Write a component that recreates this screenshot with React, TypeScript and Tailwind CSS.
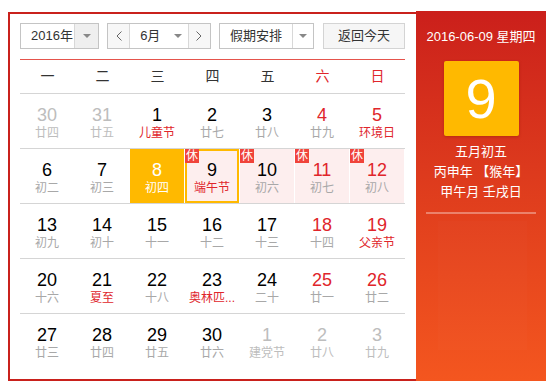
import React from 'react';

type Day = {
  d: number;
  sub: string;
  other?: boolean;
  weekend?: boolean;
  fest?: boolean;
  rest?: boolean;
  today?: boolean;
  picked?: boolean;
};

const weeks: Day[][] = [
  [
    { d: 30, sub: '廿四', other: true },
    { d: 31, sub: '廿五', other: true },
    { d: 1, sub: '儿童节', fest: true },
    { d: 2, sub: '廿七' },
    { d: 3, sub: '廿八' },
    { d: 4, sub: '廿九', weekend: true },
    { d: 5, sub: '环境日', weekend: true, fest: true },
  ],
  [
    { d: 6, sub: '初二' },
    { d: 7, sub: '初三' },
    { d: 8, sub: '初四', today: true },
    { d: 9, sub: '端午节', fest: true, rest: true, picked: true },
    { d: 10, sub: '初六', rest: true },
    { d: 11, sub: '初七', rest: true, weekend: true },
    { d: 12, sub: '初八', rest: true, weekend: true },
  ],
  [
    { d: 13, sub: '初九' },
    { d: 14, sub: '初十' },
    { d: 15, sub: '十一' },
    { d: 16, sub: '十二' },
    { d: 17, sub: '十三' },
    { d: 18, sub: '十四', weekend: true },
    { d: 19, sub: '父亲节', weekend: true, fest: true },
  ],
  [
    { d: 20, sub: '十六' },
    { d: 21, sub: '夏至', fest: true },
    { d: 22, sub: '十八' },
    { d: 23, sub: '奥林匹...', fest: true },
    { d: 24, sub: '二十' },
    { d: 25, sub: '廿一', weekend: true },
    { d: 26, sub: '廿二', weekend: true },
  ],
  [
    { d: 27, sub: '廿三' },
    { d: 28, sub: '廿四' },
    { d: 29, sub: '廿五' },
    { d: 30, sub: '廿六' },
    { d: 1, sub: '建党节', other: true },
    { d: 2, sub: '廿八', other: true },
    { d: 3, sub: '廿九', other: true },
  ],
];

const Caret = () => (
  <svg width="8" height="4" viewBox="0 0 8 4">
    <path d="M0 0h8L4 4z" fill="#888" />
  </svg>
);

const Chevron = ({ dir }: { dir: 'l' | 'r' }) => (
  <svg width="6" height="10" viewBox="0 0 6 10">
    <path
      d={dir === 'l' ? 'M5.5 0.5L1 5l4.5 4.5' : 'M0.5 0.5L5 5 0.5 9.5'}
      fill="none"
      stroke="#666"
      strokeWidth="1"
    />
  </svg>
);

function Cell({ day }: { day: Day }) {
  let numColor = 'text-black';
  let subColor = 'text-[#a8a8a8]';
  if (day.weekend) numColor = 'text-[#e0252b]';
  if (day.fest) subColor = 'text-[#e0252b]';
  if (day.other) {
    numColor = 'text-[#bdbdbd]';
    subColor = 'text-[#bdbdbd]';
  }
  if (day.today) {
    numColor = 'text-white';
    subColor = 'text-white';
  }

  let bg = '';
  if (day.rest) bg = 'bg-[#fdeeee]';
  if (day.today) bg = 'bg-[#ffb900]';

  return (
    <div
      className={`relative mr-px flex h-[54px] flex-col items-center pt-[10px] ${bg} ${
        day.picked ? 'shadow-[inset_0_0_0_2px_#ffb900]' : ''
      }`}
    >
      {day.rest && (
        <span className="absolute left-0 top-0 h-[14px] w-[14px] bg-[#f0433a] text-center text-[12px] leading-[14px] text-white">
          休
        </span>
      )}
      <span className={`text-[18px] leading-[22px] ${numColor}`}>{day.d}</span>
      <span className={`whitespace-nowrap text-[12px] leading-[14px] ${subColor}`}>{day.sub}</span>
    </div>
  );
}

export default function App() {
  const weekdays = ['一', '二', '三', '四', '五', '六', '日'];

  return (
    <div className="h-[384px] w-[556px] bg-white pl-2 pt-3 font-['Liberation_Sans','Noto_Sans_CJK_SC',sans-serif]">
      <div className="flex h-[369px]">
        {/* calendar body */}
        <div className="w-[408px] border-2 border-r-0 border-[#c9211c] pl-[10px] pt-[9px]">
          <div className="flex h-[26px] w-[385px] gap-2 text-[13px] text-[#333]">
            <div className="flex w-[80px] border border-[#c4c4c4]">
              <span className="flex flex-1 items-center pl-[10px]">2016年</span>
              <span className="flex w-[24px] items-center justify-center border-l border-[#d8d8d8] bg-[#efefef]">
                <Caret />
              </span>
            </div>
            <div className="flex w-[105px] border border-[#c4c4c4]">
              <span className="flex w-[22px] items-center justify-center border-r border-[#d8d8d8] bg-[#f7f7f7]">
                <Chevron dir="l" />
              </span>
              <span className="flex flex-1 items-center justify-between pl-[10px] pr-[6px]">
                6月
                <Caret />
              </span>
              <span className="flex w-[22px] items-center justify-center border-l border-[#d8d8d8] bg-[#f7f7f7]">
                <Chevron dir="r" />
              </span>
            </div>
            <div className="flex w-[96px] border border-[#c4c4c4]">
              <span className="flex flex-1 items-center pl-[10px]">假期安排</span>
              <span className="flex w-[21px] items-center justify-center border-l border-[#d8d8d8]">
                <Caret />
              </span>
            </div>
            <button className="ml-px flex w-[83px] items-center justify-center border border-[#d4d4d4] bg-[#f6f6f6]">
              返回今天
            </button>
          </div>

          <div className="mt-[10px] w-[385px] border-t border-[#e5534c]">
            <div className="grid h-[34px] grid-cols-7 border-b border-[#d5d5d5] text-[14px]">
              {weekdays.map((w, i) => (
                <span
                  key={w}
                  className={`flex items-center justify-center ${i > 4 ? 'text-[#e0252b]' : 'text-[#333]'}`}
                >
                  {w}
                </span>
              ))}
            </div>
            {weeks.map((week, i) => (
              <div key={i} className={`grid grid-cols-7 ${i > 0 ? 'border-t border-[#d5d5d5]' : ''}`}>
                {week.map((day, j) => (
                  <Cell key={j} day={day} />
                ))}
              </div>
            ))}
          </div>
        </div>

        {/* side panel */}
        <div className="-mt-px flex w-[130px] flex-col items-center bg-linear-to-b from-[#cb1f1b] to-[#f4561f] pt-[17px] text-[13px] leading-[18px] text-white">
          <span>2016-06-09 星期四</span>
          <div className="mt-[15px] flex h-[75px] w-[75px] items-center justify-center rounded-[2px] bg-[#ffb900] text-[56px] leading-none shadow-[0_1px_3px_rgba(120,20,0,0.35)]">
            9
          </div>
          <div className="mt-[6px] flex flex-col items-center leading-[20px]">
            <span>五月初五</span>
            <span>丙申年 【猴年】</span>
            <span>甲午月 壬戌日</span>
          </div>
          <div className="mt-[10px] h-[2px] w-[110px] bg-white/35" />
          <div className="ml-[3px] mt-[7px] h-[129px] w-[89px] bg-white/[0.015]" />
        </div>
      </div>
    </div>
  );
}
